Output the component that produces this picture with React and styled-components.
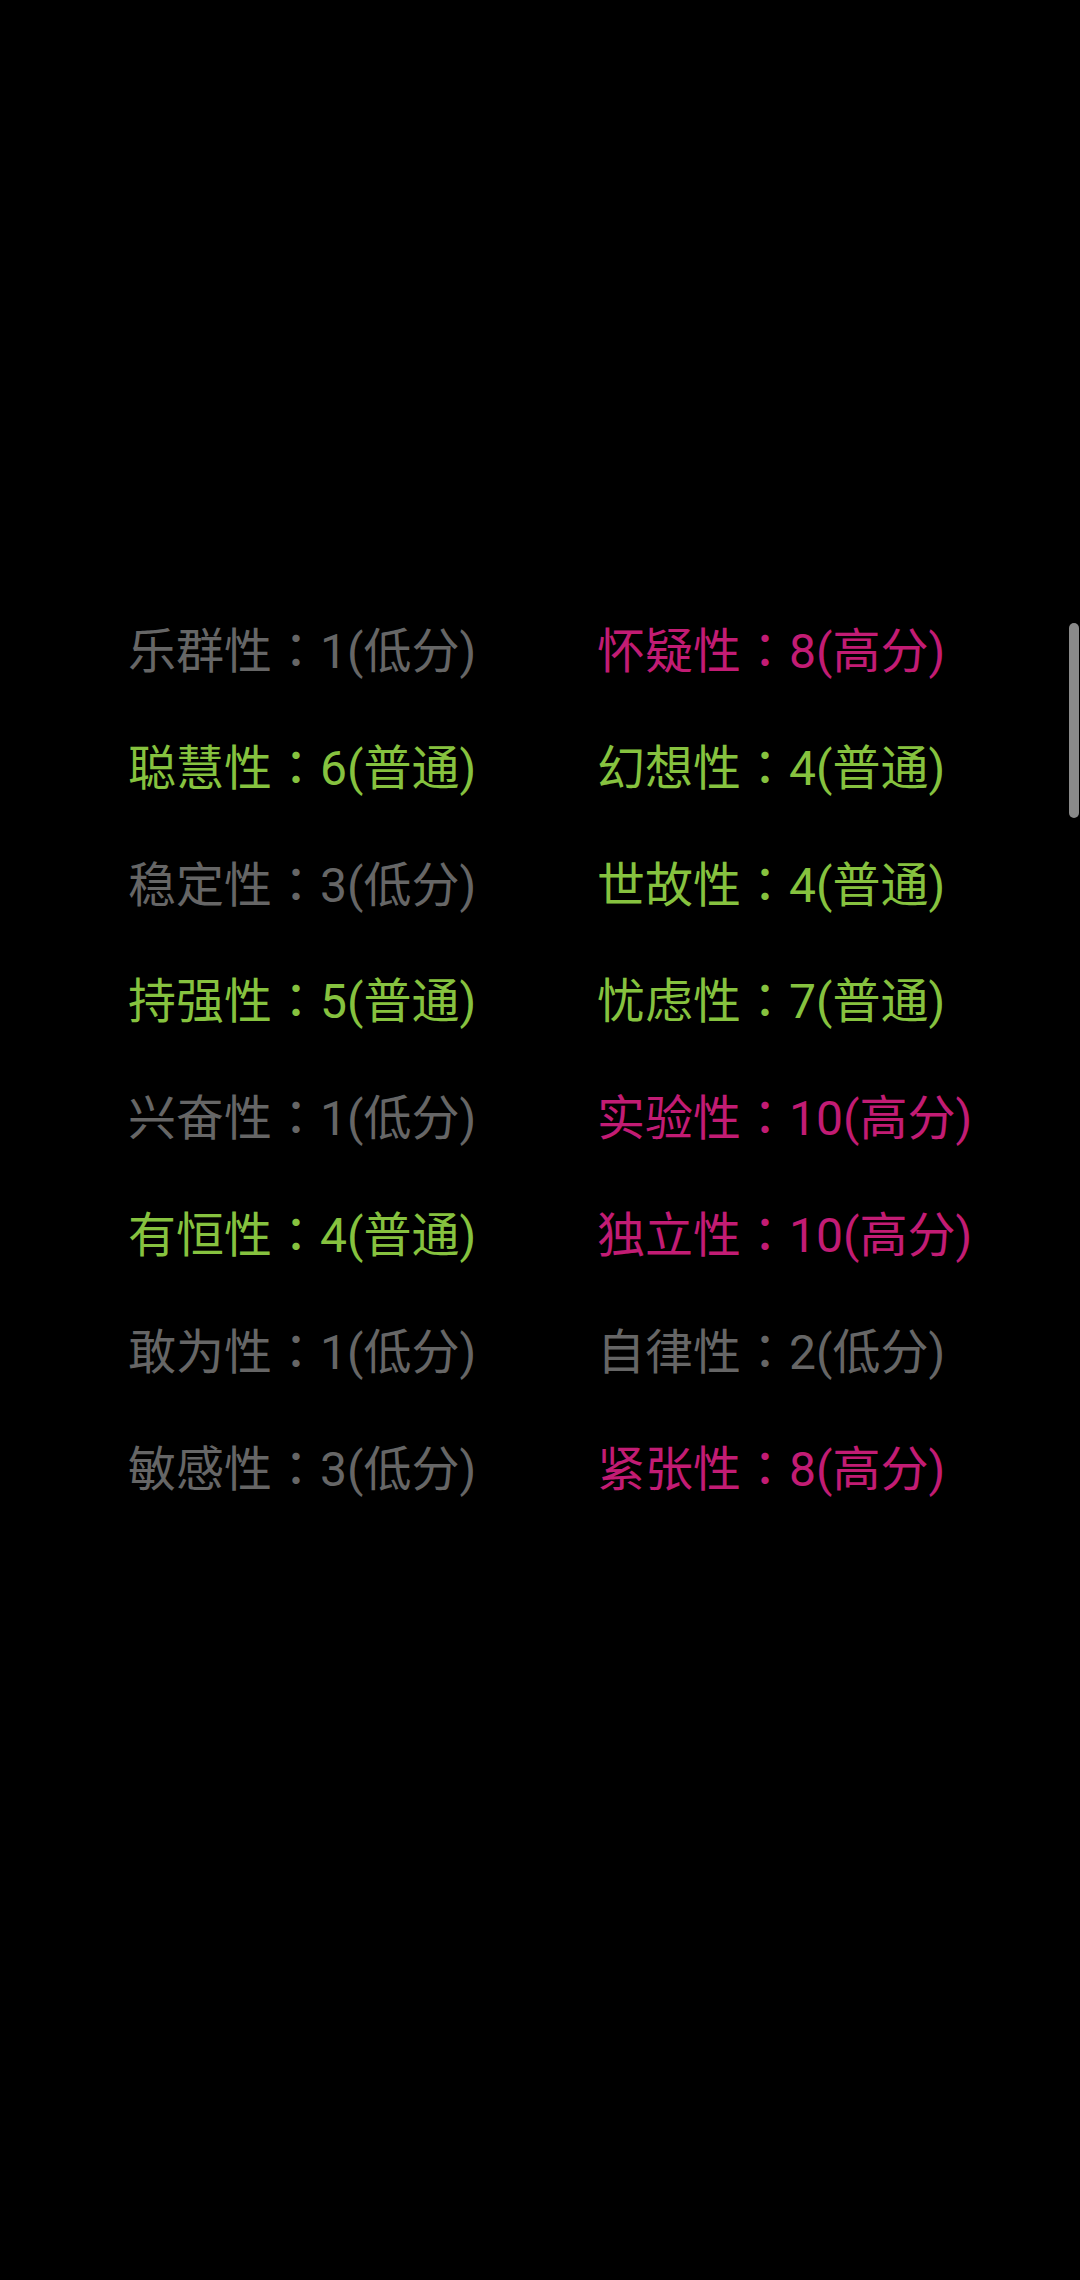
import styled, { createGlobalStyle } from "styled-components";

const GlobalStyle = createGlobalStyle`
  html, body {
    margin: 0;
    padding: 0;
    background-color: #000;
  }
`;

const Screen = styled.div`
  width: 1080px;
  min-height: 2280px;
  position: relative;
  background-color: #000;
  box-sizing: border-box;
  padding: 589px 0px 0px 128px;
  font-family: Roboto, "Noto Sans CJK SC", sans-serif;
`;

const TraitGrid = styled.div`
  display: grid;
  grid-template-columns: 469px 1fr;
  grid-auto-rows: 116.8px;
`;

const TraitItem = styled.div`
  font-size: 48px;
  line-height: 116.8px;
  white-space: nowrap;
  color: ${({ $level }) =>
    $level === "high" ? "#c21c74" : $level === "mid" ? "#86c23f" : "#666666"};
`;

/* full-width colon drawn centred in its cell, as on the phone */
const Colon = styled.span`
  font-family: "Noto Sans CJK TC", sans-serif;
`;

const ScrollThumb = styled.div`
  position: absolute;
  top: 623px;
  right: 1px;
  width: 10px;
  height: 195px;
  border-radius: 5px;
  background-color: #8a8a8a;
`;

const levelLabel = { low: "低分", mid: "普通", high: "高分" };

const traits = [
  ["乐群性", 1, "low"],
  ["怀疑性", 8, "high"],
  ["聪慧性", 6, "mid"],
  ["幻想性", 4, "mid"],
  ["稳定性", 3, "low"],
  ["世故性", 4, "mid"],
  ["持强性", 5, "mid"],
  ["忧虑性", 7, "mid"],
  ["兴奋性", 1, "low"],
  ["实验性", 10, "high"],
  ["有恒性", 4, "mid"],
  ["独立性", 10, "high"],
  ["敢为性", 1, "low"],
  ["自律性", 2, "low"],
  ["敏感性", 3, "low"],
  ["紧张性", 8, "high"],
];

const App = () => {
  return (
    <>
      <GlobalStyle />
      <Screen>
        <TraitGrid>
          {traits.map(([name, score, level]) => (
            <TraitItem key={name} $level={level}>
              {name}
              <Colon>：</Colon>
              {`${score}(${levelLabel[level]})`}
            </TraitItem>
          ))}
        </TraitGrid>
        <ScrollThumb />
      </Screen>
    </>
  );
};

export default App;
